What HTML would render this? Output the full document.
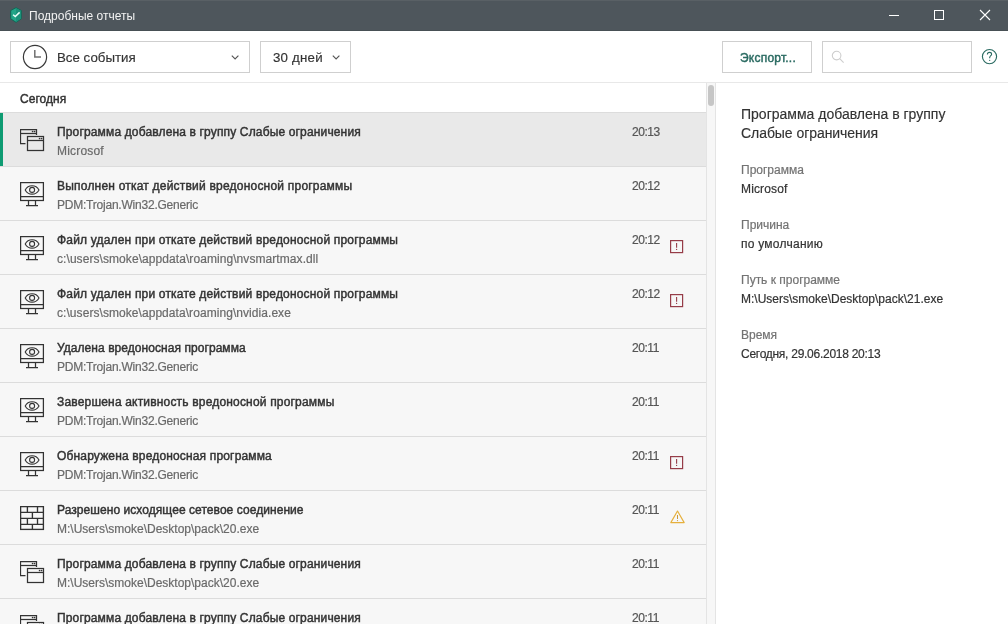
<!DOCTYPE html>
<html><head><meta charset="utf-8">
<style>
*{box-sizing:border-box;margin:0;padding:0}
html,body{width:1008px;height:624px;overflow:hidden;background:#fff;font-family:"Liberation Sans",sans-serif;}
.abs{position:absolute}
#title,#list,.ddtxt,#hdr,.dh,.dl,.dv,.abs{will-change:transform}
#title{position:absolute;left:0;top:0;width:1008px;height:31px;background:#4e565c;border-top:1px solid #596065;border-bottom:1px solid #485055}
#title .t{position:absolute;left:29px;top:8px;font-size:12px;color:#f2f2f2;line-height:14px;white-space:nowrap}
#toolbar{position:absolute;left:0;top:31px;width:1008px;height:51px;background:#fff}
.dd{position:absolute;top:41px;height:32px;border:1px solid #cfcfcf;background:#fff}
.ddtxt{position:absolute;font-size:13.3px;color:#333;-webkit-text-stroke:0.15px #333;line-height:16px;white-space:nowrap}
#sep{position:absolute;left:0;top:82px;width:1008px;height:1px;background:#e8e8e8}
#hdr{position:absolute;left:20px;top:92px;font-size:12px;color:#333;-webkit-text-stroke:0.45px #333;letter-spacing:0.03px;line-height:14px}
#list{position:absolute;left:0;top:112px;width:706px;height:512px;background:#f7f7f7;overflow:hidden}
.row{position:absolute;left:0;width:706px;height:54px;border-top:1px solid #dcdcdc}
.row.sel{background:#e9e9e9}
.row .bar{position:absolute;left:0;top:0;width:3px;height:54px;background:#0e9b72}
.row .ic{position:absolute;left:20px}
.row .tt{position:absolute;left:57px;top:12px;font-size:12px;color:#333;-webkit-text-stroke:0.45px #333;line-height:14px;white-space:nowrap}
.row .st{position:absolute;left:57px;top:31px;font-size:12px;color:#6a6a6a;-webkit-text-stroke:0.2px #6a6a6a;line-height:14px;white-space:nowrap}
.row .tm{position:absolute;left:632px;top:12px;font-size:12px;color:#555;-webkit-text-stroke:0.2px #555;letter-spacing:-0.45px;line-height:14px}
.row .al{position:absolute;left:670px;top:20px}
#sb{position:absolute;left:706px;top:83px;width:10px;height:541px;background:#f7f7f7;border-left:1px solid #e4e4e4;border-right:1px solid #e4e4e4}
#thumb{position:absolute;left:708px;top:85px;width:6px;height:21px;border-radius:3px;background:#c6c6c6}
#det{position:absolute;left:741px;top:0}
.dh{position:absolute;left:741px;font-size:14px;color:#333;-webkit-text-stroke:0.15px #333;line-height:16px;white-space:nowrap}
.dl{position:absolute;left:741px;font-size:12px;color:#737373;-webkit-text-stroke:0.2px #737373;line-height:14px;white-space:nowrap}
.dv{position:absolute;left:741px;font-size:12px;color:#333;-webkit-text-stroke:0.2px #333;line-height:14px;white-space:nowrap}
</style></head><body>

<div id="title">
  <svg class="abs" style="left:9px;top:5px" width="14" height="18" viewBox="0 0 14 18">
    <path d="M7 1.7 L12.3 4.5 V12.8 L7 16.3 L1.7 12.8 V4.5 Z" fill="#21a587" stroke="#0e6553" stroke-width="0.9"/>
    <path d="M7 2.1 L11.9 4.7 V12.6 L7 15.9 Z" fill="#1b917a"/>
    <path d="M4.1 8.7 L6.3 10.6 L10.6 6.4" fill="none" stroke="#eafff9" stroke-width="1.5"/>
  </svg>
  <div class="t">Подробные отчеты</div>
  <div class="abs" style="left:889px;top:14px;width:10px;height:1px;background:#fff"></div>
  <div class="abs" style="left:934px;top:9px;width:10px;height:10px;border:1px solid #fff"></div>
  <svg class="abs" style="left:979px;top:8px" width="12" height="12" viewBox="0 0 12 12"><path d="M1 1 L11 11 M11 1 L1 11" stroke="#fff" stroke-width="1.1"/></svg>
</div>

<div id="toolbar"></div>
<div class="dd" style="left:10px;width:240px"></div>
<svg class="abs" style="left:22px;top:44px" width="26" height="26" viewBox="0 0 26 26"><circle cx="13" cy="13" r="11.6" fill="none" stroke="#383838" stroke-width="1.2"/><path d="M12.8 6 V12.9 H19" fill="none" stroke="#707070" stroke-width="1.5"/></svg>
<div class="ddtxt" style="left:57px;top:50px">Все события</div>
<svg class="abs" style="left:231px;top:54px" width="9" height="8" viewBox="0 0 9 8"><path d="M0.8 1.6 L4.1 4.9 L7.4 1.6" fill="none" stroke="#555" stroke-width="1.15"/></svg>
<div class="dd" style="left:260px;width:91px"></div>
<div class="ddtxt" style="left:273px;top:50px;letter-spacing:0.2px">30 дней</div>
<svg class="abs" style="left:332px;top:54px" width="9" height="8" viewBox="0 0 9 8"><path d="M0.8 1.6 L4.1 4.9 L7.4 1.6" fill="none" stroke="#555" stroke-width="1.15"/></svg>

<div class="dd" style="left:722px;width:90px"></div>
<div class="abs" style="left:740px;top:51px;font-size:12px;color:#2b6b62;-webkit-text-stroke:0.45px #2b6b62;letter-spacing:0.22px;line-height:14px">Экспорт...</div>
<div class="dd" style="left:822px;width:150px"></div>
<svg class="abs" style="left:831px;top:50px" width="14" height="14" viewBox="0 0 14 14"><circle cx="5.6" cy="5.6" r="4.3" fill="none" stroke="#cdcdcd" stroke-width="1.1"/><path d="M8.7 8.7 L12.6 12.6" stroke="#cdcdcd" stroke-width="1.1"/></svg>
<svg class="abs" style="left:981px;top:48px" width="17" height="17" viewBox="0 0 17 17"><circle cx="8.5" cy="8.6" r="7.1" fill="none" stroke="#2b6b62" stroke-width="1.15"/><path d="M6.4 6.4 C6.4 5.1 7.3 4.4 8.5 4.4 C9.7 4.4 10.6 5.2 10.6 6.3 C10.6 7.6 8.7 7.9 8.7 9.6 V10.3" fill="none" stroke="#2b6b62" stroke-width="1.1"/><circle cx="8.7" cy="12.3" r="0.65" fill="#2b6b62"/></svg>

<div id="sep"></div>
<div id="hdr">Сегодня</div>

<div id="list">
<div class="row sel" style="top:0px"><div class="bar"></div><svg class="ic" style="top:16px" width="25" height="23" viewBox="0 0 25 23" fill="none" stroke="#333" stroke-width="1.25">
<path d="M5.5 14.5 H0.5 V0.5 H16.5 V6"/><path d="M0.5 4.5 H16.5"/>
<rect x="7.5" y="7.5" width="16" height="14"/><path d="M7.5 11.5 H23.5"/>
<g fill="#333" stroke="none"><circle cx="12.6" cy="2.5" r="0.85"/><circle cx="14.6" cy="2.5" r="0.85"/><circle cx="19.6" cy="9.5" r="0.85"/><circle cx="21.6" cy="9.5" r="0.85"/></g></svg><div class="tt" style="letter-spacing:0.15px">Программа добавлена в группу Слабые ограничения</div><div class="st" style="letter-spacing:0.18px">Microsof</div><div class="tm">20:13</div></div>
<div class="row" style="top:54px"><svg class="ic" style="top:15px" width="25" height="25" viewBox="0 0 25 25" fill="none" stroke="#333" stroke-width="1.25">
<rect x="0.6" y="0.6" width="22.8" height="17.9"/><path d="M0.6 14.5 H23.4 M8.5 18.5 V23.5 M15.5 18.5 V23.5 M6 23.5 H18"/>
<path d="M5.2 7.9 C8.2 2.3 15.9 2.3 19 7.9 C15.9 13.5 8.2 13.5 5.2 7.9 Z" stroke-width="1.1"/><circle cx="12.1" cy="7.9" r="2.5" stroke-width="1.1"/></svg><div class="tt" style="letter-spacing:0.21px">Выполнен откат действий вредоносной программы</div><div class="st" style="letter-spacing:-0.22px">PDM:Trojan.Win32.Generic</div><div class="tm">20:12</div></div>
<div class="row" style="top:108px"><svg class="ic" style="top:15px" width="25" height="25" viewBox="0 0 25 25" fill="none" stroke="#333" stroke-width="1.25">
<rect x="0.6" y="0.6" width="22.8" height="17.9"/><path d="M0.6 14.5 H23.4 M8.5 18.5 V23.5 M15.5 18.5 V23.5 M6 23.5 H18"/>
<path d="M5.2 7.9 C8.2 2.3 15.9 2.3 19 7.9 C15.9 13.5 8.2 13.5 5.2 7.9 Z" stroke-width="1.1"/><circle cx="12.1" cy="7.9" r="2.5" stroke-width="1.1"/></svg><div class="tt" style="letter-spacing:0.18px">Файл удален при откате действий вредоносной программы</div><div class="st" style="letter-spacing:0.07px">c:\users\smoke\appdata\roaming\nvsmartmax.dll</div><div class="tm">20:12</div><svg class="al" style="top:19px" width="14" height="14" viewBox="0 0 14 14"><rect x="0.6" y="0.6" width="12" height="12" fill="none" stroke="#963c48" stroke-width="1.2"/><path d="M6.6 3 V7.8" stroke="#963c48" stroke-width="1.1"/><circle cx="6.6" cy="9.4" r="0.65" fill="#963c48"/></svg></div>
<div class="row" style="top:162px"><svg class="ic" style="top:15px" width="25" height="25" viewBox="0 0 25 25" fill="none" stroke="#333" stroke-width="1.25">
<rect x="0.6" y="0.6" width="22.8" height="17.9"/><path d="M0.6 14.5 H23.4 M8.5 18.5 V23.5 M15.5 18.5 V23.5 M6 23.5 H18"/>
<path d="M5.2 7.9 C8.2 2.3 15.9 2.3 19 7.9 C15.9 13.5 8.2 13.5 5.2 7.9 Z" stroke-width="1.1"/><circle cx="12.1" cy="7.9" r="2.5" stroke-width="1.1"/></svg><div class="tt" style="letter-spacing:0.18px">Файл удален при откате действий вредоносной программы</div><div class="st" style="letter-spacing:0.06px">c:\users\smoke\appdata\roaming\nvidia.exe</div><div class="tm">20:12</div><svg class="al" style="top:19px" width="14" height="14" viewBox="0 0 14 14"><rect x="0.6" y="0.6" width="12" height="12" fill="none" stroke="#963c48" stroke-width="1.2"/><path d="M6.6 3 V7.8" stroke="#963c48" stroke-width="1.1"/><circle cx="6.6" cy="9.4" r="0.65" fill="#963c48"/></svg></div>
<div class="row" style="top:216px"><svg class="ic" style="top:15px" width="25" height="25" viewBox="0 0 25 25" fill="none" stroke="#333" stroke-width="1.25">
<rect x="0.6" y="0.6" width="22.8" height="17.9"/><path d="M0.6 14.5 H23.4 M8.5 18.5 V23.5 M15.5 18.5 V23.5 M6 23.5 H18"/>
<path d="M5.2 7.9 C8.2 2.3 15.9 2.3 19 7.9 C15.9 13.5 8.2 13.5 5.2 7.9 Z" stroke-width="1.1"/><circle cx="12.1" cy="7.9" r="2.5" stroke-width="1.1"/></svg><div class="tt" style="letter-spacing:0.06px">Удалена вредоносная программа</div><div class="st" style="letter-spacing:-0.22px">PDM:Trojan.Win32.Generic</div><div class="tm">20:11</div></div>
<div class="row" style="top:270px"><svg class="ic" style="top:15px" width="25" height="25" viewBox="0 0 25 25" fill="none" stroke="#333" stroke-width="1.25">
<rect x="0.6" y="0.6" width="22.8" height="17.9"/><path d="M0.6 14.5 H23.4 M8.5 18.5 V23.5 M15.5 18.5 V23.5 M6 23.5 H18"/>
<path d="M5.2 7.9 C8.2 2.3 15.9 2.3 19 7.9 C15.9 13.5 8.2 13.5 5.2 7.9 Z" stroke-width="1.1"/><circle cx="12.1" cy="7.9" r="2.5" stroke-width="1.1"/></svg><div class="tt" style="letter-spacing:0.18px">Завершена активность вредоносной программы</div><div class="st" style="letter-spacing:-0.22px">PDM:Trojan.Win32.Generic</div><div class="tm">20:11</div></div>
<div class="row" style="top:324px"><svg class="ic" style="top:15px" width="25" height="25" viewBox="0 0 25 25" fill="none" stroke="#333" stroke-width="1.25">
<rect x="0.6" y="0.6" width="22.8" height="17.9"/><path d="M0.6 14.5 H23.4 M8.5 18.5 V23.5 M15.5 18.5 V23.5 M6 23.5 H18"/>
<path d="M5.2 7.9 C8.2 2.3 15.9 2.3 19 7.9 C15.9 13.5 8.2 13.5 5.2 7.9 Z" stroke-width="1.1"/><circle cx="12.1" cy="7.9" r="2.5" stroke-width="1.1"/></svg><div class="tt" style="letter-spacing:0.16px">Обнаружена вредоносная программа</div><div class="st" style="letter-spacing:-0.22px">PDM:Trojan.Win32.Generic</div><div class="tm">20:11</div><svg class="al" style="top:19px" width="14" height="14" viewBox="0 0 14 14"><rect x="0.6" y="0.6" width="12" height="12" fill="none" stroke="#963c48" stroke-width="1.2"/><path d="M6.6 3 V7.8" stroke="#963c48" stroke-width="1.1"/><circle cx="6.6" cy="9.4" r="0.65" fill="#963c48"/></svg></div>
<div class="row" style="top:378px"><svg class="ic" style="top:15px" width="25" height="25" viewBox="0 0 25 25" fill="none" stroke="#333" stroke-width="1.35">
<rect x="0.6" y="0.6" width="22.8" height="22.8"/><path d="M0.6 6.4 H23.4 M0.6 12.4 H23.4 M0.6 18.4 H23.4 M7.4 0.6 V6.4 M17.5 0.6 V6.4 M12.4 6.4 V12.4 M7.4 12.4 V18.4 M17.5 12.4 V18.4 M12.4 18.4 V23.4"/></svg><div class="tt" style="letter-spacing:0.06px">Разрешено исходящее сетевое соединение</div><div class="st" style="letter-spacing:0px">M:\Users\smoke\Desktop\pack\20.exe</div><div class="tm">20:11</div><svg class="al" style="top:19px" width="16" height="14" viewBox="0 0 16 14"><path d="M7.5 1 L14.2 12.6 H0.8 Z" fill="none" stroke="#e6b03c" stroke-width="1.15" stroke-linejoin="round"/><path d="M7.5 5 V9" stroke="#c89a3a" stroke-width="1"/><circle cx="7.5" cy="10.6" r="0.6" fill="#c89a3a"/></svg></div>
<div class="row" style="top:432px"><svg class="ic" style="top:16px" width="25" height="23" viewBox="0 0 25 23" fill="none" stroke="#333" stroke-width="1.25">
<path d="M5.5 14.5 H0.5 V0.5 H16.5 V6"/><path d="M0.5 4.5 H16.5"/>
<rect x="7.5" y="7.5" width="16" height="14"/><path d="M7.5 11.5 H23.5"/>
<g fill="#333" stroke="none"><circle cx="12.6" cy="2.5" r="0.85"/><circle cx="14.6" cy="2.5" r="0.85"/><circle cx="19.6" cy="9.5" r="0.85"/><circle cx="21.6" cy="9.5" r="0.85"/></g></svg><div class="tt" style="letter-spacing:0.15px">Программа добавлена в группу Слабые ограничения</div><div class="st" style="letter-spacing:0px">M:\Users\smoke\Desktop\pack\20.exe</div><div class="tm">20:11</div></div>
<div class="row" style="top:486px"><svg class="ic" style="top:16px" width="25" height="23" viewBox="0 0 25 23" fill="none" stroke="#333" stroke-width="1.25">
<path d="M5.5 14.5 H0.5 V0.5 H16.5 V6"/><path d="M0.5 4.5 H16.5"/>
<rect x="7.5" y="7.5" width="16" height="14"/><path d="M7.5 11.5 H23.5"/>
<g fill="#333" stroke="none"><circle cx="12.6" cy="2.5" r="0.85"/><circle cx="14.6" cy="2.5" r="0.85"/><circle cx="19.6" cy="9.5" r="0.85"/><circle cx="21.6" cy="9.5" r="0.85"/></g></svg><div class="tt" style="letter-spacing:0.15px">Программа добавлена в группу Слабые ограничения</div><div class="st" style="letter-spacing:0px">M:\Users\smoke\Desktop\pack\20.exe</div><div class="tm">20:11</div></div>
</div>

<div id="sb"></div>
<div id="thumb"></div>

<div class="dh" style="top:106px">Программа добавлена в группу</div>
<div class="dh" style="top:125px;letter-spacing:-0.06px">Слабые ограничения</div>
<div class="dl" style="top:163px">Программа</div>
<div class="dv" style="top:182px;letter-spacing:0.15px">Microsof</div>
<div class="dl" style="top:218px">Причина</div>
<div class="dv" style="top:237px;letter-spacing:0.25px">по умолчанию</div>
<div class="dl" style="top:273px">Путь к программе</div>
<div class="dv" style="top:292px">M:\Users\smoke\Desktop\pack\21.exe</div>
<div class="dl" style="top:328px">Время</div>
<div class="dv" style="top:347px;letter-spacing:-0.27px">Сегодня, 29.06.2018 20:13</div>
</body></html>
